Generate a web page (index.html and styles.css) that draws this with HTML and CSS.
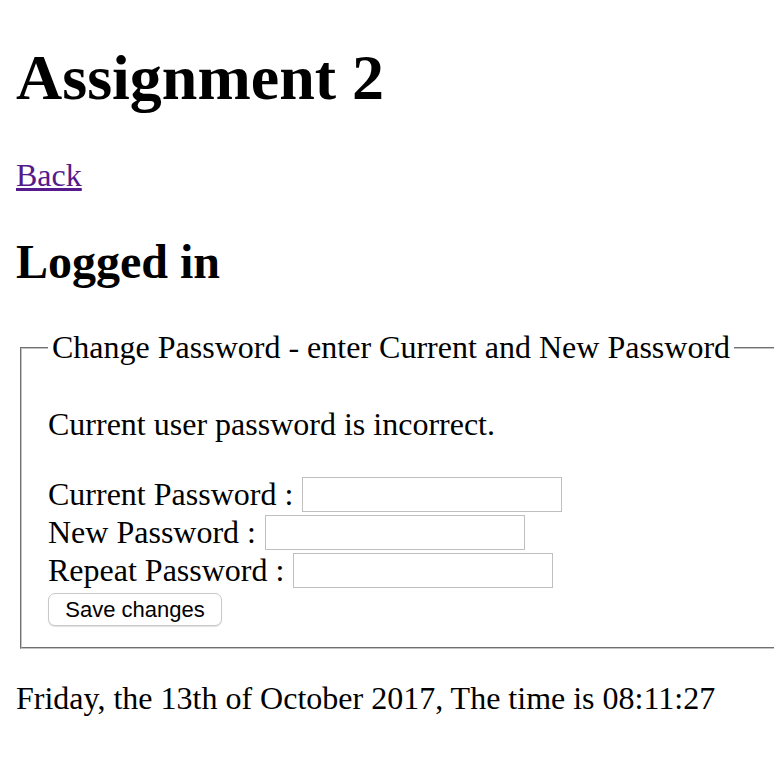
FILE: index.html
```html
<!DOCTYPE html>
<html>
<head>
<meta charset="utf-8">
<title>Assignment 2</title>
<link rel="stylesheet" href="styles.css">
</head>
<body>
<h1 class="title">Assignment 2</h1>
<p class="nav"><a class="back" href="#">Back</a></p>
<h2 class="status">Logged in</h2>
<form class="pw-form">
  <fieldset class="pw-set">
    <legend class="pw-legend">Change Password - enter Current and New Password</legend>
    <p class="msg">Current user password is incorrect.</p>
    <div class="row"><span class="lbl">Current Password :</span><input class="field" type="password"></div>
    <div class="row"><span class="lbl">New Password :</span><input class="field" type="password"></div>
    <div class="row"><span class="lbl">Repeat Password :</span><input class="field" type="password"></div>
    <button class="save" type="button">Save changes</button>
  </fieldset>
</form>
<div class="clock">Friday, the 13th of October 2017, The time is 08:11:27</div>
</body>
</html>
```

FILE: styles.css
```css
html {
  background: #fff;
}
body {
  margin: 0 0 16px 16px;
  font-family: "Liberation Serif", "Times New Roman", serif;
  font-size: 32px;
  color: #000;
}
.title {
  font-size: 64px;
  font-weight: bold;
  margin: 40.5px 0 42.88px;
}
.nav {
  margin: 32px 0;
}
.back {
  color: #551a8b;
  text-decoration: underline;
}
.status {
  font-size: 48px;
  font-weight: bold;
  margin: 39.84px 0;
}
.pw-form {
  margin: 0 0 31px 0;
}
.pw-set {
  margin: 0 0 0 4px;
  padding: 11px 24px 21px 26px;
  border: 2px groove #c4c4c4;
  border-right: none;
  min-width: 0;
}
.pw-legend {
  padding: 0 4px;
  font-size: 32px;
}
.msg {
  margin: 29px 0 32px;
}
.row {
  display: flex;
  align-items: center;
  height: 38px;
  gap: 9px;
}
.lbl {
  line-height: 36.8px;
}
.field {
  box-sizing: border-box;
  width: 260px;
  height: 35px;
  margin: 0;
  border: 1px solid #bfbfbf;
  background: #fff;
  padding: 0 4px;
  font-size: 22px;
}
.save {
  display: block;
  margin-top: 4px;
  box-sizing: border-box;
  height: 33px;
  width: 174px;
  padding: 0;
  font-family: "Liberation Sans", Arial, sans-serif;
  font-size: 22px;
  color: #000;
  background: #fff;
  border: 1px solid #c9c9c9;
  border-radius: 7px;
  box-shadow: 0 1px 1px rgba(0,0,0,0.12);
}
.clock {
  margin: 0;
}
```
